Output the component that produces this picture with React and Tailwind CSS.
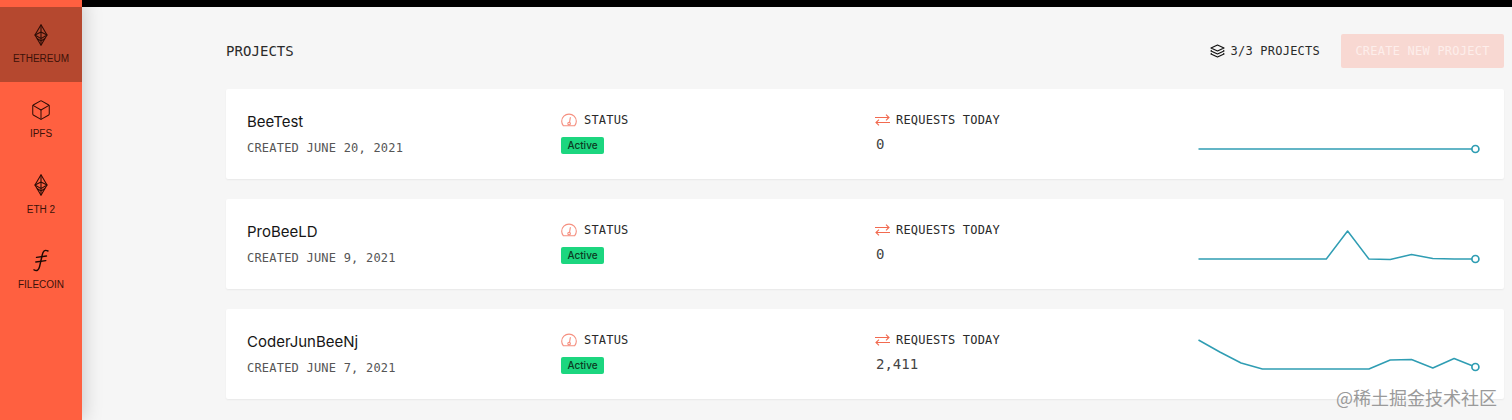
import { Box } from 'lucide-react';

const mono = { fontFamily: '"DejaVu Sans Mono", monospace' };

const projects = [
  {
    name: 'BeeTest',
    created: 'CREATED JUNE 20, 2021',
    requests: '0',
    points: [60, 60, 60, 60, 60, 60, 60, 60, 60, 60, 60, 60, 60, 60],
  },
  {
    name: 'ProBeeLD',
    created: 'CREATED JUNE 9, 2021',
    requests: '0',
    points: [60, 60, 60, 60, 60, 60, 60, 32, 60, 60.5, 55.5, 59.5, 60, 60],
  },
  {
    name: 'CoderJunBeeNj',
    created: 'CREATED JUNE 7, 2021',
    requests: '2,411',
    points: [31, 43, 54, 60, 60, 60, 60, 60, 60, 51, 50.5, 59, 49.5, 58],
  },
];

const sideItems = [
  { label: 'ETHEREUM', icon: 'eth', active: true },
  { label: 'IPFS', icon: 'box' },
  { label: 'ETH 2', icon: 'eth' },
  { label: 'FILECOIN', icon: 'fil' },
];

const EthIcon = () => (
  <svg width="14" height="22" viewBox="0 0 14 22" fill="none" stroke="#2e0d06" strokeWidth="1.1" strokeLinejoin="round">
    <path d="M7 .8 13 11 7 21.2 1 11Z" />
    <path d="M7 .8V21.2M1 11l6-3 6 3-6 3.6ZM3 14.5l4 2.5 4-2.5" />
  </svg>
);

const FilIcon = () => (
  <svg width="16" height="23" viewBox="0 0 16 23" fill="none" stroke="#1f0904" strokeWidth="1.4" strokeLinecap="round">
    <path d="M15 2C11.4.2 10 2.4 9.1 6.5L6.6 17.5C5.8 21 4 22.4 1 20.8" />
    <path d="M3.5 8.4 13.5 7M2.8 13l10-1.4" />
  </svg>
);

const StackIcon = () => (
  <svg width="15" height="14" viewBox="0 0 15 14" fill="none" stroke="#111" strokeWidth="1.2" strokeLinejoin="round" className="shrink-0">
    <path d="M7.5 1 14 4 7.5 7 1 4Z" />
    <path d="M1.6 6.2 1 7l6.5 3L14 7l-.6-.8" />
    <path d="M1.6 9.2 1 10l6.5 3 6.5-3-.6-.8" />
  </svg>
);

const GaugeIcon = () => (
  <svg width="16" height="14" viewBox="0 0 16 14" fill="none" stroke="#f58f7f" strokeWidth="1.1" strokeLinecap="round" className="shrink-0">
    <path d="M3 12.8H2.4C1.3 11.6.7 10 .7 8.3.7 4.3 4 1.1 8 1.1s7.3 3.2 7.3 7.2c0 1.7-.6 3.3-1.7 4.5H3Z" />
    <path d="M9.3 4.6 8.5 9.6" />
    <circle cx="8.1" cy="10.6" r="1.3" />
  </svg>
);

const SwapIcon = () => (
  <svg width="15" height="12" viewBox="0 0 15 12" fill="none" stroke="#f26a4f" strokeWidth="1.1" className="shrink-0">
    <path d="M0 3.5H14M11 .7l3 2.8-3 2.8M15 8.5H1M4 5.7 1 8.5l3 2.8" />
  </svg>
);

const Sparkline = ({ points }) => {
  const xs = points.map((_, i) => 0.5 + i * 21.3);
  const line = points.map((y, i) => `${xs[i]},${y}`).join(' ');
  return (
    <svg width="282" height="90" viewBox="0 0 282 90" fill="none" className="ml-[9px]">
      <polyline points={line} stroke="#2f9db3" strokeWidth="1.5" strokeLinejoin="round" />
      <circle cx={xs[13]} cy={points[13]} r="3.5" fill="#fff" stroke="#2f9db3" strokeWidth="1.7" />
    </svg>
  );
};

const ProjectCard = ({ project }) => (
  <div className="h-[90px] bg-white rounded-[2px] shadow-[0_1px_2px_rgba(0,0,0,0.06)] grid grid-cols-[314px_314px_314px_1fr] pl-[21px]">
    <div className="flex flex-col pt-[22px]">
      <div className="text-[15px] leading-[21px] text-[#161616]" style={{ fontFamily: 'Inter, sans-serif' }}>{project.name}</div>
      <div className="mt-[8px] text-[12px] leading-[16px] tracking-[0.21px] text-[#555]" style={mono}>{project.created}</div>
    </div>
    <div className="flex flex-col items-start pt-[23px]">
      <div className="flex items-center gap-[7px] h-[16px]">
        <GaugeIcon />
        <span className="text-[12px] tracking-[0.2px] text-[#2a2a2a]" style={mono}>STATUS</span>
      </div>
      <div className="mt-[9px] h-[17px] w-[43px] rounded-[2px] bg-[#1cd67f] flex items-center justify-center text-[10px] font-medium text-[#0b3a22]" style={{ fontFamily: 'Inter, sans-serif' }}>
        Active
      </div>
    </div>
    <div className="flex flex-col items-start pt-[23px]">
      <div className="flex items-center gap-[6px] h-[16px]">
        <SwapIcon />
        <span className="text-[12px] tracking-[0.2px] text-[#2a2a2a]" style={mono}>REQUESTS TODAY</span>
      </div>
      <div className="mt-[6px] ml-px text-[14px] leading-[20px] text-[#444]" style={mono}>{project.requests}</div>
    </div>
    <Sparkline points={project.points} />
  </div>
);

export default function App() {
  return (
    <div className="relative h-[420px] flex overflow-hidden bg-[#f6f6f6]">
      <aside className="relative z-10 w-[82px] shrink-0 pt-[7px] bg-[#ff6040] flex flex-col shadow-[2px_0_18px_rgba(0,0,0,0.18)]">
        {sideItems.map((item) => (
          <div key={item.label} className={`h-[75.4px] flex flex-col items-center pt-[16px] ${item.active ? 'bg-[#b5482f]' : ''}`}>
            <div className="h-[23px] flex items-center justify-center">
              {item.icon === 'eth' && <EthIcon />}
              {item.icon === 'box' && <Box size={22} strokeWidth={1.1} color="#2e0d06" />}
              {item.icon === 'fil' && <FilIcon />}
            </div>
            <span className="mt-[6px] text-[10px] leading-[14px] text-[#3c1209]" style={{ fontFamily: '"Liberation Sans", sans-serif' }}>{item.label}</span>
          </div>
        ))}
      </aside>

      <main className="flex-1 min-w-0">
        <div className="h-[7px] bg-black" />
        <div className="pl-[144px] pr-[8px]">
          <div className="flex items-center mt-[27px] h-[34px]">
            <h1 className="text-[14px] tracking-[0.05px] text-[#2a2a2a]" style={mono}>PROJECTS</h1>
            <div className="ml-auto flex items-center gap-[6px] mr-[21px]">
              <StackIcon />
              <span className="text-[12px] tracking-[0.23px] text-[#2a2a2a]" style={mono}>3/3 PROJECTS</span>
            </div>
            <button className="w-[163px] h-[34px] rounded-[2px] bg-[#f8d8d2] text-[12px] tracking-[0.23px] text-[#fdeeeb]" style={mono}>
              CREATE NEW PROJECT
            </button>
          </div>
          <div className="mt-[21px] flex flex-col gap-[20px]">
            {projects.map((project) => (
              <ProjectCard key={project.name} project={project} />
            ))}
          </div>
        </div>
      </main>

      <div className="absolute right-[15px] bottom-[12px] text-[18px] leading-[22px] text-[#9a9a9a]" style={{ fontFamily: '"Noto Sans CJK SC", sans-serif' }}>
        @稀土掘金技术社区
      </div>
    </div>
  );
}
